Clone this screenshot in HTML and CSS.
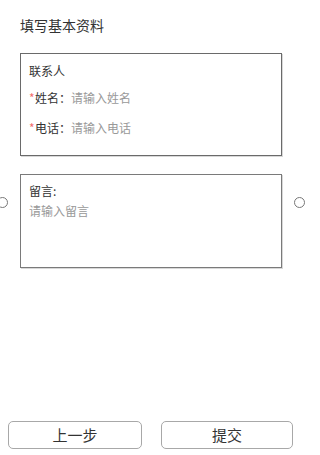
FILE: index.html
```html
<!DOCTYPE html>
<html lang="zh">
<head>
<meta charset="utf-8">
<link rel="stylesheet" href="styles.css">
</head>
<body>
<div class="page">
  <h1 class="title">填写基本资料</h1>
  <section class="card contact">
    <div class="row head">联系人</div>
    <div class="row field f1"><span class="req">*</span><span class="label">姓名：</span><span class="ph">请输入姓名</span></div>
    <div class="row field f2"><span class="req">*</span><span class="label">电话：</span><span class="ph">请输入电话</span></div>
  </section>
  <section class="card message">
    <div class="row label">留言:</div>
    <div class="row ph">请输入留言</div>
    <span class="dot dot-left"></span>
    <span class="dot dot-right"></span>
  </section>
  <footer class="actions">
    <button class="btn btn-prev">上一步</button>
    <button class="btn btn-submit">提交</button>
  </footer>
</div>
</body>
</html>
```

FILE: styles.css
```css
html, body {
  margin: 0;
  padding: 0;
  background: #fff;
}
.page {
  height: 455px;
  width: 308px;
  display: flex;
  flex-direction: column;
  font-family: "Noto Sans CJK SC", "Noto Sans", sans-serif;
  color: #333;
  position: relative;
}
.title {
  margin: 15px 0 0 20px;
  font-size: 14px;
  font-weight: normal;
  line-height: 20px;
  color: #333;
}
.card {
  margin-left: 20px;
  width: 262px;
  box-sizing: border-box;
  border: 1px solid #6a6a6a;
  box-shadow: 1px 1px 0 #d8d8d8;
  padding: 0 8px;
  font-size: 12px;
  line-height: 20px;
}
.contact {
  margin-top: 18px;
  height: 103px;
  padding-top: 7px;
}
.contact .f1 { margin-top: 7px; }
.contact .f2 { margin-top: 10px; }
.req {
  color: #f26d6d;
  display: inline-block;
  width: 6px;
}
.label { color: #333; }
.ph { color: #999; }
.message {
  margin-top: 18px;
  height: 94px;
  padding-top: 6px;
  border-color: #7a7a7a;
}
.dot {
  position: absolute;
  width: 11px;
  height: 11px;
  box-sizing: border-box;
  border: 1px solid #777;
  border-radius: 50%;
  background: #fff;
  top: 197px;
}
.dot-left { left: -3px; }
.dot-right { left: 294px; }
.actions {
  margin-top: auto;
  display: flex;
  gap: 19px;
  padding: 0 0 6px 8px;
}
.btn {
  flex: none;
  box-sizing: border-box;
  height: 28px;
  border: 1px solid #a8a8a8;
  border-radius: 5px;
  background: #fff;
  font-family: "Noto Sans CJK SC", "Noto Sans", sans-serif;
  font-size: 15px;
  color: #333;
  padding: 0;
  line-height: 26px;
}
.btn-prev { width: 134px; }
.btn-submit { width: 132px; }
```
